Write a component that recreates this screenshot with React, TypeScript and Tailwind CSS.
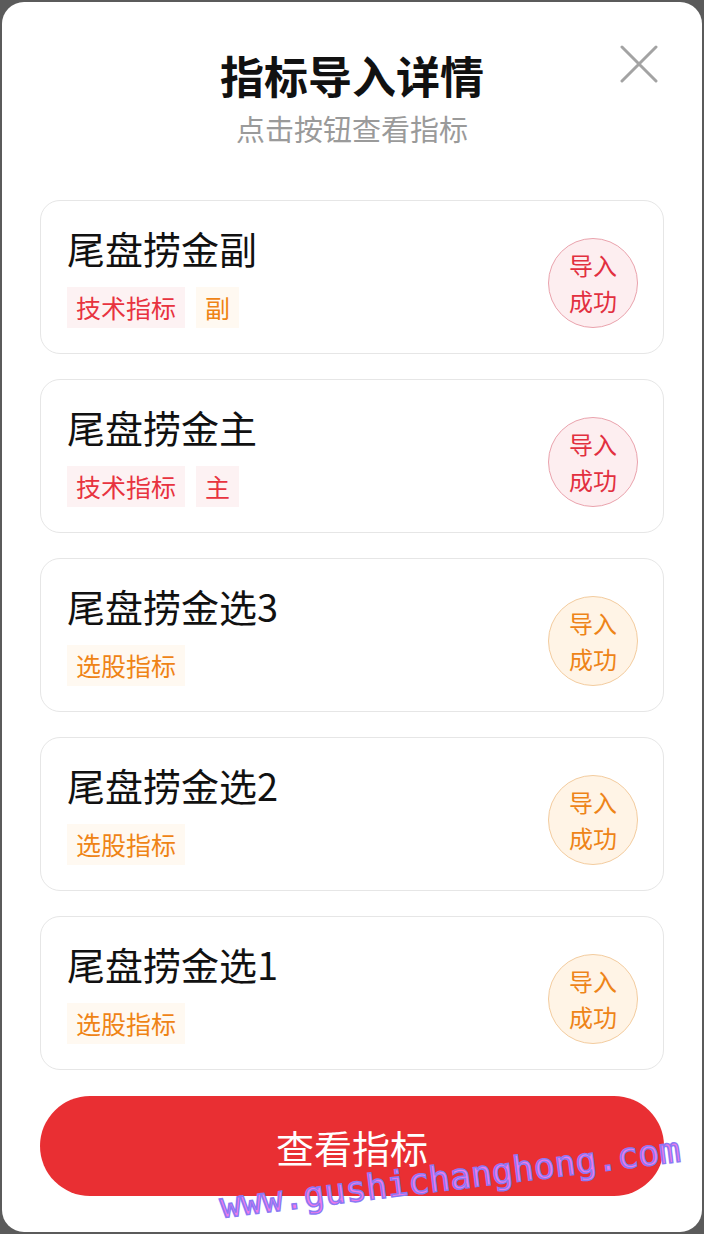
import React from 'react';

type Tag = { label: string; tone: 'red' | 'orange' };

interface Indicator {
  name: string;
  tags: Tag[];
  tone: 'red' | 'orange';
}

const indicators: Indicator[] = [
  { name: '尾盘捞金副', tags: [{ label: '技术指标', tone: 'red' }, { label: '副', tone: 'orange' }], tone: 'red' },
  { name: '尾盘捞金主', tags: [{ label: '技术指标', tone: 'red' }, { label: '主', tone: 'red' }], tone: 'red' },
  { name: '尾盘捞金选3', tags: [{ label: '选股指标', tone: 'orange' }], tone: 'orange' },
  { name: '尾盘捞金选2', tags: [{ label: '选股指标', tone: 'orange' }], tone: 'orange' },
  { name: '尾盘捞金选1', tags: [{ label: '选股指标', tone: 'orange' }], tone: 'orange' }
];

const tagClass = {
  red: 'bg-[#fdf2f3] text-[#e8333f]',
  orange: 'bg-[#fff9f1] text-[#ef8416]'
};

const badgeClass = {
  red: 'bg-[#fdeef0] border-[#eaa3ad] text-[#e2303f]',
  orange: 'bg-[#fff4e6] border-[#f3cc9f] text-[#ee8418]'
};

const IndicatorCard: React.FC<{ item: Indicator }> = ({ item }) => (
  <div className="flex h-[154px] justify-between rounded-[20px] border border-[#e6e6e6] bg-white pl-[26px] pr-[25px]">
    <div className="flex flex-col pt-[23px]">
      <div className="text-[38px] leading-[48px] text-[#111]">{item.name}</div>
      <div className="mt-[15px] flex gap-[11px]">
        {item.tags.map((tag) => (
          <span
            key={tag.label}
            className={`flex h-[41px] items-center px-[9px] text-[25px] ${tagClass[tag.tone]}`}
          >
            {tag.label}
          </span>
        ))}
      </div>
    </div>
    <div
      className={`mt-[37px] flex h-[90px] w-[90px] flex-col items-center justify-center rounded-full border text-[24px] leading-[36px] ${badgeClass[item.tone]}`}
    >
      <span>导入</span>
      <span>成功</span>
    </div>
  </div>
);

export default function App() {
  return (
    <div
      className="h-[1234px] w-[704px] overflow-hidden bg-[#5b5b5b] p-[2px]"
      style={{ fontFamily: '"Noto Sans CJK SC", "Noto Sans", sans-serif' }}
    >
      <div className="relative flex h-full flex-col rounded-[22px] bg-white px-[38px] pt-[47px]">
        <button className="absolute right-[44px] top-[43px] h-[38px] w-[38px]" aria-label="close">
          <svg viewBox="0 0 38 38" className="h-full w-full" fill="none" stroke="#a3a3a3" strokeWidth="3" strokeLinecap="round">
            <path d="M2 2 L36 36 M36 2 L2 36" />
          </svg>
        </button>

        <h1 className="text-center text-[44px] font-bold leading-[52px] text-[#111]">指标导入详情</h1>
        <p className="mt-[9px] text-center text-[29px] leading-[36px] text-[#9a9a9a]">点击按钮查看指标</p>

        <div className="mt-[54px] flex flex-col gap-[25px]">
          {indicators.map((item) => (
            <IndicatorCard key={item.name} item={item} />
          ))}
        </div>

        <button className="mt-[26px] flex h-[100px] items-center justify-center rounded-full bg-[#e92f33] text-[38px] text-white">
          查看指标
        </button>

        <div
          className="pointer-events-none absolute left-[218px] top-[1178px] origin-left -rotate-[7deg] whitespace-nowrap text-[35px] text-[#f27ae6] [-webkit-text-stroke:1.5px_#8b79f5]"
          style={{ fontFamily: '"DejaVu Sans Mono", "Liberation Mono", monospace' }}
        >
          www.gushichanghong.com
        </div>
      </div>
    </div>
  );
}
